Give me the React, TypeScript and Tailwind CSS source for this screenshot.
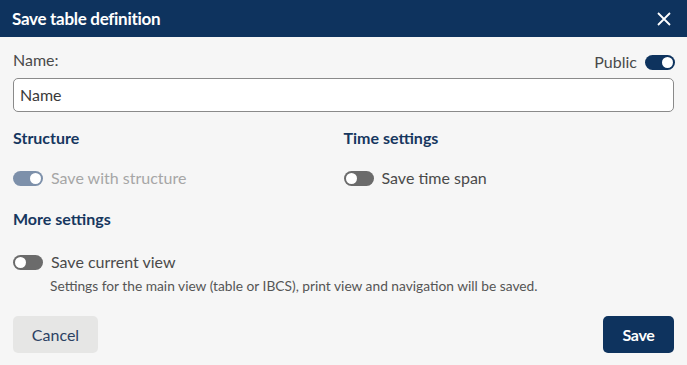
import React from "react";

function Toggle({ on, color }: { on: boolean; color: string }) {
  return (
    <span
      className={`inline-flex items-center w-[30px] h-[15px] rounded-full px-[2px] shrink-0 ${color} ${on ? "justify-end" : "justify-start"}`}
    >
      <span className="w-[11px] h-[11px] rounded-full bg-white" />
    </span>
  );
}

export default function App() {
  return (
    <div
      className="w-[687px] h-[365px] bg-[#f6f6f6] flex flex-col overflow-hidden"
      style={{ fontFamily: "Lato, 'Noto Sans', sans-serif" }}
    >
      <div className="h-[37px] bg-[#0e335e] flex items-center justify-between pl-[12px] pr-[16px] shrink-0">
        <span className="text-white font-bold text-[17px] leading-[20px] tracking-[-0.3px]">Save table definition</span>
        <svg width="14" height="14" viewBox="0 0 14 14" className="mt-[1px]">
          <path d="M1 1 L13 13 M13 1 L1 13" stroke="white" strokeWidth="1.8" />
        </svg>
      </div>
      <div className="flex flex-col px-[13px] pt-[14px] flex-1">
        <div className="flex items-end justify-between h-[18px]">
          <span className="text-[16px] text-[#4a4a4a] leading-[18px]">Name:</span>
          <div className="flex items-center gap-[8px] mr-[-1px] mb-[-3px]">
            <span className="text-[16px] leading-[20px] text-[#4a4a4a]">Public</span>
            <Toggle on color="bg-[#0e335e]" />
          </div>
        </div>
        <div className="mt-[9px] h-[34px] rounded-[5px] border border-[#8a8a8a] bg-white flex items-center px-[6px] text-[16px] text-[#3a3a3a]">
          Name
        </div>
        <div className="grid grid-cols-2 mt-[16px]">
          <div className="flex flex-col">
            <span className="text-[16px] font-bold text-[#16375f] leading-[20px]">Structure</span>
            <div className="flex items-center gap-[8px] mt-[20px] h-[20px]">
              <Toggle on color="bg-[#7d90aa]" />
              <span className="text-[16px] leading-[20px] text-[#a6a6a6]">Save with structure</span>
            </div>
          </div>
          <div className="flex flex-col">
            <span className="text-[16px] font-bold text-[#16375f] leading-[20px]">Time settings</span>
            <div className="flex items-center gap-[8px] mt-[20px] h-[20px]">
              <Toggle on={false} color="bg-[#6b6b6b]" />
              <span className="text-[16px] leading-[20px] text-[#4a4a4a]">Save time span</span>
            </div>
          </div>
        </div>
        <span className="text-[16px] font-bold text-[#16375f] leading-[20px] mt-[21px]">More settings</span>
        <div className="flex items-center gap-[8px] mt-[23px] h-[20px]">
          <Toggle on={false} color="bg-[#6b6b6b]" />
          <span className="text-[16px] leading-[20px] text-[#4a4a4a]">Save current view</span>
        </div>
        <span className="text-[13.75px] leading-[18px] text-[#555] ml-[37px] mt-[5px]">
          Settings for the main view (table or IBCS), print view and navigation will be saved.
        </span>
        <div className="flex justify-between mt-[21px]">
          <button className="w-[85px] h-[37px] rounded-[5px] bg-[#e6e6e5] text-[16px] text-[#2b4163]">Cancel</button>
          <button className="w-[71px] h-[37px] rounded-[5px] bg-[#0e335e] text-[16px] font-bold text-white tracking-[-0.3px]">Save</button>
        </div>
      </div>
    </div>
  );
}
